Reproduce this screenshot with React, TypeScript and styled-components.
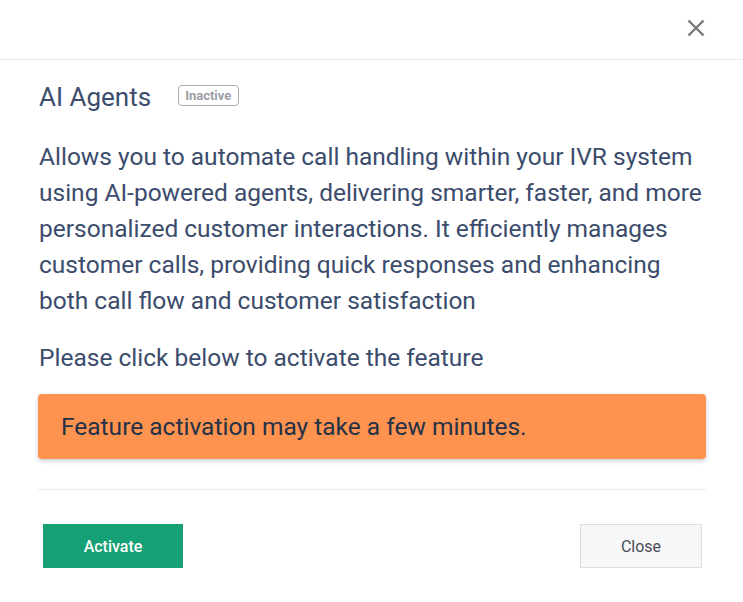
import React from 'react';
import styled, {createGlobalStyle} from 'styled-components';

const GlobalStyle = createGlobalStyle`
  html, body {
    margin: 0;
    padding: 0;
    background: #ffffff;
    font-family: Roboto, "Liberation Sans", sans-serif;
  }
`

const Modal = styled.div`
  width: 743px;
  height: 602px;
  background: #ffffff;
  box-sizing: border-box;
`

const Header = styled.div`
  height: 60px;
  border-bottom: 1px solid #ebebeb;
  display: flex;
  justify-content: flex-end;
  align-items: center;
  padding: 0 36px 3px 0;
  box-sizing: border-box;
`

const CloseIcon = styled.button`
  border: none;
  background: none;
  padding: 0;
  width: 22px;
  height: 22px;
  display: flex;
  align-items: center;
  justify-content: center;
  cursor: pointer;
`

const Body = styled.div`
  padding: 21px 37px 0 39px;
`

const TitleRow = styled.div`
  display: flex;
  align-items: center;
  gap: 27px;
  height: 32px;
`

const Title = styled.h2`
  margin: 0;
  font-size: 26px;
  font-weight: 400;
  color: #3b4c6c;
`

const Badge = styled.span`
  font-size: 13px;
  font-weight: 700;
  color: #9a9ea6;
  border: 1px solid #a9adb3;
  border-radius: 4px;
  padding: 1px 7px 1px 6px;
  line-height: 17px;
  margin-bottom: 3px;
`

const Description = styled.p<{ $gap?: number }>`
  margin: ${p => p.$gap ?? 24}px 0 0;
  font-size: 24.5px;
  line-height: 36px;
  color: #3b4c6c;
`

const Notice = styled.div`
  margin-top: 18px;
  background: #fd934f;
  border-radius: 4px;
  box-shadow: 0 2px 5px rgba(0, 0, 0, 0.2);
  height: 65px;
  display: flex;
  align-items: center;
  padding: 0 23px;
  font-size: 24.5px;
  color: #243146;
  margin-left: -1px;
`

const Divider = styled.hr`
  margin: 30px 0 0 -1px;
  border: none;
  border-top: 1px solid #ebebeb;
`

const Footer = styled.div`
  display: flex;
  justify-content: space-between;
  padding: 34px 4px 0 4px;
`

const Button = styled.button<{ $primary?: boolean }>`
  height: 44px;
  width: ${p => (p.$primary ? '140px' : '122px')};
  font-family: Roboto, "Liberation Sans", sans-serif;
  font-size: 16px;
  font-weight: ${p => (p.$primary ? 500 : 400)};
  border-radius: 0;
  cursor: pointer;
  background: ${p => (p.$primary ? '#16a075' : '#f6f7f9')};
  color: ${p => (p.$primary ? '#ffffff' : '#4a4d52')};
  border: ${p => (p.$primary ? 'none' : '1px solid #dcdee1')};
`

const App: React.FC = () => {
    return (
        <Modal>
            <GlobalStyle/>
            <Header>
                <CloseIcon aria-label="Close">
                    <svg width="18" height="18" viewBox="0 0 18 18">
                        <path d="M1.5 1.5 L16.5 16.5 M16.5 1.5 L1.5 16.5" stroke="#777" strokeWidth="2.4" strokeLinecap="butt"/>
                    </svg>
                </CloseIcon>
            </Header>
            <Body>
                <TitleRow>
                    <Title>AI Agents</Title>
                    <Badge>Inactive</Badge>
                </TitleRow>
                <Description $gap={26}>
                    Allows you to automate call handling within your IVR system using AI-powered agents, delivering
                    smarter, faster, and more personalized customer interactions. It efficiently manages customer
                    calls, providing quick responses and enhancing both call flow and customer satisfaction
                </Description>
                <Description $gap={21}>Please click below to activate the feature</Description>
                <Notice>Feature activation may take a few minutes.</Notice>
                <Divider/>
                <Footer>
                    <Button $primary>Activate</Button>
                    <Button>Close</Button>
                </Footer>
            </Body>
        </Modal>
    )
}

export default App
